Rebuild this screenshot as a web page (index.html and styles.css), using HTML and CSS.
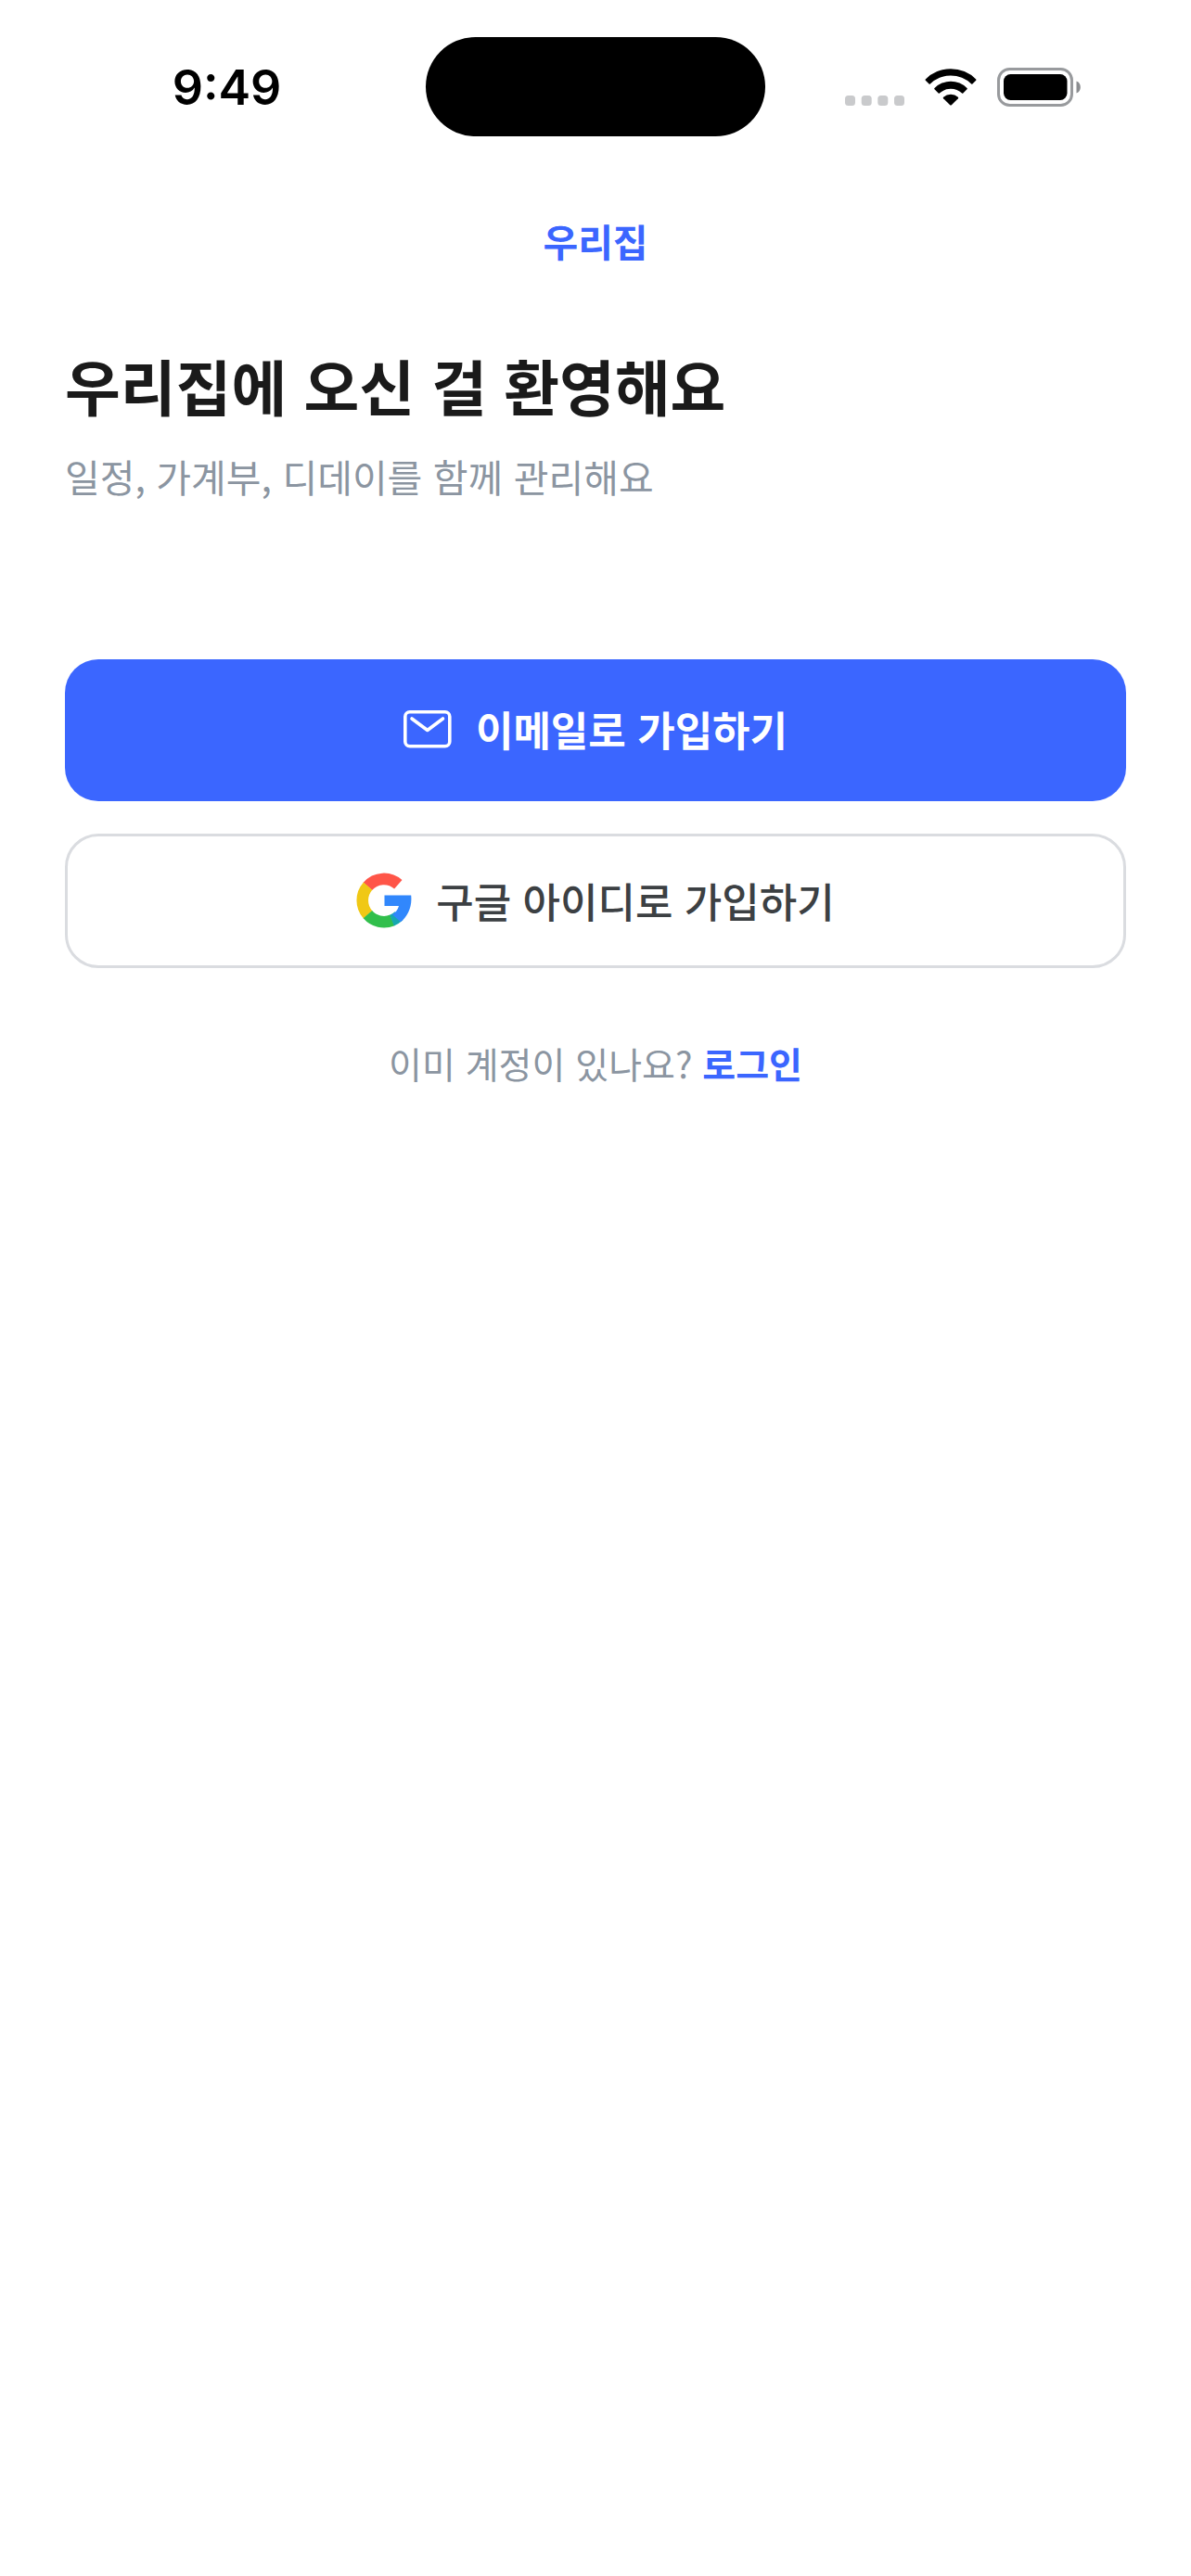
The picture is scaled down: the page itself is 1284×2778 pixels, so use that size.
FILE: index.html
```html
<!DOCTYPE html>
<html lang="ko">

<head>
    <meta charset="UTF-8">
    <meta name="viewport" content="width=device-width, initial-scale=1.0">
    <title>우리집</title>
    <link rel="stylesheet" href="styles.css">
</head>

<body>

    <header class="status-bar">
        <div class="status-bar__time">9:49</div>
        <div class="status-bar__island"></div>
        <div class="status-bar__icons">
            <svg class="status-bar__signal" width="64" height="12" viewBox="0 0 64 12" fill="#c9cacc" aria-hidden="true">
                <rect x="0" y="0" width="11" height="11" rx="3.5" />
                <rect x="17.7" y="0" width="11" height="11" rx="3.5" />
                <rect x="35.3" y="0" width="11" height="11" rx="3.5" />
                <rect x="53" y="0" width="11" height="11" rx="3.5" />
            </svg>
            <svg width="56" height="42" viewBox="0 0 56 42" aria-hidden="true">
                <path d="M0.8 12.4A38.5 38.5 0 0 1 55.2 12.4Q55.8 13.1 55.2 13.7L51.4 17.5Q50.8 18 50.2 17.5A31.7 31.7 0 0 0 5.8 17.5Q5.2 18 4.6 17.5L0.8 13.7Q0.2 13.1 0.8 12.4Z" />
                <path d="M10.5 22A24.6 24.6 0 0 1 45.5 22Q46.1 22.7 45.5 23.3L41.3 27.5Q40.7 28 40.1 27.5A17.8 17.8 0 0 0 15.9 27.5Q15.3 28 14.7 27.5L10.5 23.3Q9.9 22.7 10.5 22Z" />
                <path d="M20.1 31.8A11.6 11.6 0 0 1 35.9 31.8Q36.6 32.5 35.9 33.2L28.8 40.2Q28 40.9 27.2 40.2L20.1 33.2Q19.4 32.5 20.1 31.8Z" />
            </svg>
            <svg width="91" height="42" viewBox="0 0 91 42" aria-hidden="true">
                <rect x="1.5" y="1.5" width="79" height="39" rx="12" fill="none" stroke="#989a9d" stroke-width="3" />
                <rect x="7" y="7" width="68.5" height="28" rx="7.5" />
                <path d="M85.5 14.5C91.3 16.5 91.3 25.5 85.5 27.5Z" fill="#8b8d90" />
            </svg>
        </div>
    </header>

    <main class="welcome">
        <div class="welcome__brand">우리집</div>
        <h1 class="welcome__title">우리집에 오신 걸 환영해요</h1>
        <p class="welcome__text">일정, 가계부, 디데이를 함께 관리해요</p>

        <div class="welcome__actions">
            <button type="button" class="btn btn--email">
                <svg width="52" height="42" viewBox="0 0 52 42" fill="none" stroke="#fff" stroke-width="3.6" stroke-linecap="round" stroke-linejoin="round" aria-hidden="true">
                    <rect x="1.8" y="2.8" width="48" height="37" rx="5" />
                    <path d="M9 10L25.800 22.500L42.500 10" />
                </svg>
                이메일로 가입하기
            </button>
            <button type="button" class="btn btn--google">
                <svg width="60" height="60" viewBox="0 0 60 60" fill="none" stroke-width="12.6" aria-hidden="true">
                    <path d="M45.3 12.8A23.2 23.2 0 0 0 12.4 14.8" stroke="#ff5548" />
                    <path d="M12.6 14.6A23.2 23.2 0 0 0 12.6 45.4" stroke="#f0c815" />
                    <path d="M12.4 45.2A23.2 23.2 0 0 0 39 51.4" stroke="#31bf4c" />
                    <path d="M38.5 51.6A23.2 23.2 0 0 0 46 46.8" stroke="#16a8b0" />
                    <path d="M59.2 24.5H30.5V36H46C44.8 40.3 42.3 43.3 39 45.2L48 53.3C55.2 47.6 60.6 37.5 59.2 24.5Z" fill="#3187fc" />
                </svg>
                구글 아이디로 가입하기
            </button>
        </div>

        <p class="welcome__login">이미 계정이 있나요? <a href="#login" class="welcome__link">로그인</a></p>
    </main>

</body>

</html>
```

FILE: styles.css
```css
*{
    box-sizing: border-box;
}

body{
    margin: 0;
    min-height: 100vh;
    background-color: #fff;
    font-family: "Noto Sans CJK KR", sans-serif;
}

/* status bar */
.status-bar{
    display: grid;
    grid-template-columns: 1fr 366px 1fr;
    align-items: center;
    padding-top: 40px;
}

.status-bar__time{
    padding: 2px 0 0 30px;
    font-family: Inter, sans-serif;
    font-size: 52px;
    font-weight: 600;
    line-height: 60px;
    text-align: center;
}

.status-bar__island{
    height: 107px;
    border-radius: 54px;
    background-color: #000;
}

.status-bar__icons{
    display: flex;
    align-items: center;
    justify-content: center;
    gap: 22px;
    padding-right: 32px;
}

.status-bar__signal{
    align-self: flex-end;
}

/* welcome */
.welcome{
    padding: 82px 70px;
}

.welcome__brand{
    font-size: 41px;
    font-weight: 700;
    line-height: 60px;
    text-align: center;
    color: #3b66ff;
}

.welcome__title{
    margin: 78px 0 0;
    font-size: 65px;
    font-weight: 700;
    line-height: 96px;
    color: #1a1a1a;
}

.welcome__text{
    margin: 20px 0 0;
    font-size: 41px;
    line-height: 60px;
    color: #8b95a1;
}

.welcome__actions{
    display: flex;
    flex-direction: column;
    gap: 35px;
    margin-top: 168px;
}

.btn{
    display: flex;
    align-items: center;
    justify-content: center;
    gap: 26px;
    width: 100%;
    border: 0;
    border-radius: 36px;
    font-family: inherit;
    font-size: 44px;
    line-height: 64px;
    cursor: pointer;
}

.btn--email{
    padding: 43px 40px 46px;
    background-color: #3b66ff;
    color: #fff;
    font-weight: 700;
}

.btn--google{
    padding: 37px 40px 38px;
    border: 3px solid #dadce0;
    background-color: #fff;
    color: #3c4043;
    font-weight: 500;
}

.welcome__login{
    margin: 72px 0 0;
    font-size: 39px;
    line-height: 60px;
    text-align: center;
    color: #8b95a1;
}

.welcome__link{
    font-weight: 700;
    color: #3b66ff;
    text-decoration: none;
}
```
